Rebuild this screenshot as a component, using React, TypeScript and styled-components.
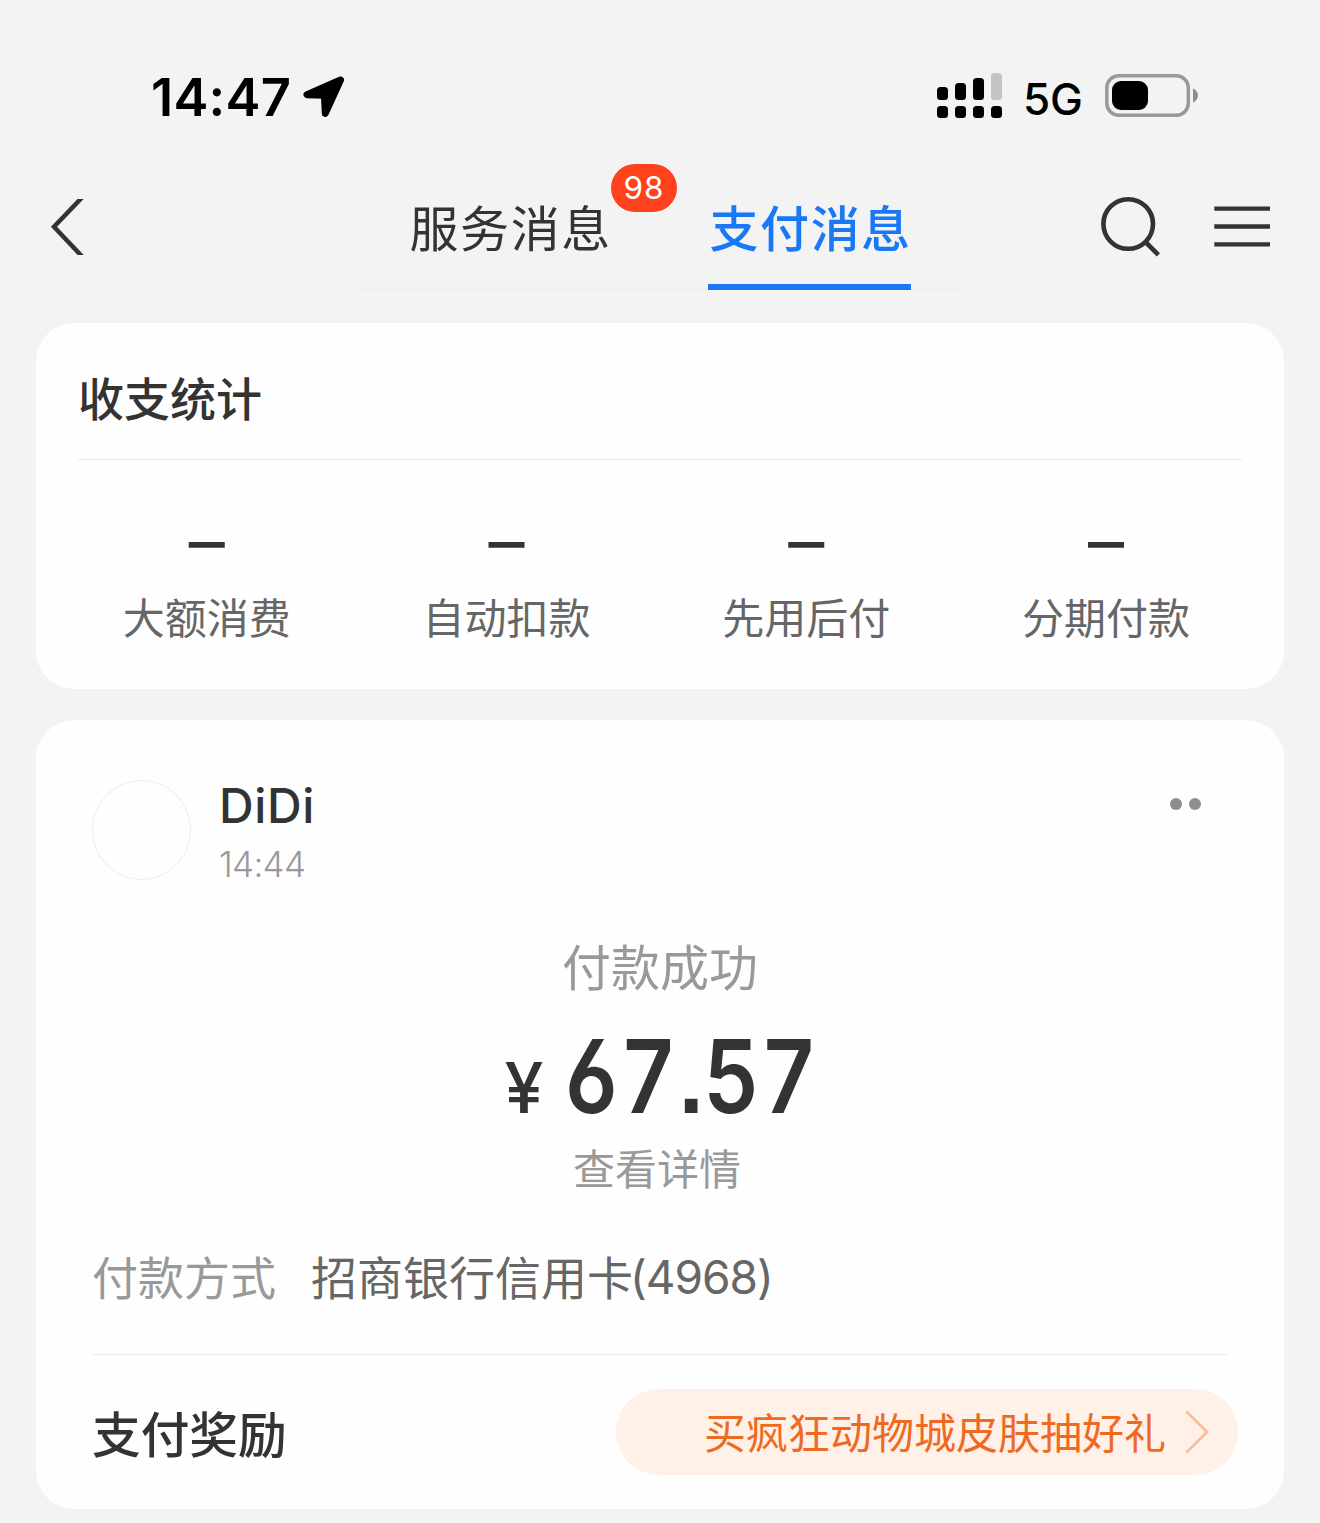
import React from 'react';
import styled, { createGlobalStyle } from 'styled-components';

const GlobalStyle = createGlobalStyle`
  * { box-sizing: border-box; }
  body {
    margin: 0;
    background: #f3f3f3;
    font-family: "Noto Sans CJK SC", sans-serif;
    color: #333;
  }
`;

const latin = '"Inter", "Liberation Sans", sans-serif';

const Screen = styled.main`
  width: 1320px;
  height: 1523px;
  overflow: hidden;
  background: #f3f3f3;
`;

const StatusBar = styled.div`
  height: 150px;
  padding: 44px 122px 0 151px;
  display: flex;
  justify-content: space-between;
  align-items: flex-start;
  color: #000;
  font-family: ${latin};
`;

const Clock = styled.div`
  display: flex;
  align-items: center;
  gap: 12px;
  height: 106px;
  font-size: 52.5px;
  font-weight: 600;
  letter-spacing: 0.2px;
  line-height: 106px;
`;

const Indicators = styled.div`
  display: flex;
  align-items: center;
  height: 104px;
`;

const Network = styled.span`
  margin: 5px 22px 0 21px;
  font-size: 44px;
  font-weight: 450;
  line-height: 104px;
`;

const Nav = styled.header`
  height: 141px;
  display: grid;
  grid-template-columns: 360px 600px 360px;
`;

const NavSide = styled.div<{ $end?: boolean }>`
  display: flex;
  align-items: flex-start;
  gap: 54px;
  justify-content: ${p => (p.$end ? 'flex-end' : 'flex-start')};
  padding: ${p => (p.$end ? '46px 50px 0 0' : '49px 0 0 50px')};
`;

const Tabs = styled.div`
  height: 140px;
  display: flex;
  border-bottom: 1px solid #ededed;
`;

const Tab = styled.div<{ $active?: boolean }>`
  flex: 1;
  display: flex;
  padding-left: 48px;
  color: ${p => (p.$active ? '#1b78f5' : '#333')};
  font-weight: ${p => (p.$active ? 500 : 400)};
`;

const TabLabel = styled.span<{ $active?: boolean }>`
  position: relative;
  height: 140px;
  width: 203px;
  padding-left: 1.5px;
  font-size: 49px;
  letter-spacing: 1.6px;
  line-height: 152px;
  white-space: nowrap;
  border-bottom: ${p => (p.$active ? '6px solid #1b78f5' : '0')};
`;

const Badge = styled.span`
  position: absolute;
  left: 203px;
  top: 14px;
  width: 66px;
  height: 48px;
  border-radius: 24px;
  background: #ff411c;
  color: #fff;
  font-family: ${latin};
  font-size: 31.5px;
  font-weight: 400;
  line-height: 48px;
  letter-spacing: 1px;
  text-align: center;
`;

const Card = styled.section<{ $height: number; $inset: number; $gap: number }>`
  height: ${p => p.$height}px;
  margin: ${p => p.$gap}px 36px 0;
  padding: 0 ${p => p.$inset}px;
  border-radius: 38px;
  background: #fefefe;
`;

const CardTitle = styled.h2`
  height: 137px;
  margin: 0;
  border-bottom: 1px solid #e9e9e9;
  font-size: 46px;
  font-weight: 500;
  line-height: 146px;
`;

const Stats = styled.div`
  display: grid;
  grid-template-columns: repeat(4, 299.7px);
  margin: 52px 0 0 -21px;
`;

const Stat = styled.div`
  display: flex;
  flex-direction: column;
  align-items: center;
`;

const StatValue = styled.span`
  height: 60px;
  font-family: ${latin};
  font-size: 72px;
  font-weight: 400;
  line-height: 58px;
`;

const StatLabel = styled.span`
  color: #666;
  font-size: 42px;
  font-weight: 400;
  line-height: 88px;
`;

const Merchant = styled.div`
  display: flex;
  padding-top: 60px;
  height: 197px;
`;

const Avatar = styled.div`
  width: 99px;
  height: 100px;
  border: 1.5px solid #eee;
  border-radius: 50%;
`;

const MerchantText = styled.div`
  flex: 1;
  margin-left: 28px;
  font-family: ${latin};
`;

const MerchantName = styled.div`
  height: 50px;
  font-size: 48px;
  font-weight: 500;
  letter-spacing: 0.6px;
  line-height: 51px;
`;

const MerchantTime = styled.div`
  height: 68px;
  color: #999;
  font-size: 35px;
  font-weight: 300;
  letter-spacing: -0.7px;
  line-height: 68px;
`;

const MoreDots = styled.div`
  display: flex;
  gap: 7px;
  padding: 18px 27px 0 0;
`;

const Dot = styled.i`
  width: 12px;
  height: 12px;
  border-radius: 50%;
  background: #8e8e8e;
`;

const Caption = styled.div<{ $size: number; $height: number; $shift?: number }>`
  height: ${p => p.$height}px;
  padding-right: ${p => p.$shift ?? 0}px;
  color: #999;
  font-size: ${p => p.$size}px;
  line-height: ${p => p.$height}px;
  text-align: center;
`;

const Amount = styled.div`
  display: flex;
  justify-content: center;
  align-items: baseline;
  height: 122px;
  padding-top: 4px;
  font-family: ${latin};
  line-height: 118px;
  gap: 22px;
`;

const Currency = styled.span`
  font-size: 70px;
  font-weight: 500;
`;

const Figure = styled.span`
  width: 250px;
  font-size: 101.5px;
  font-weight: 600;
  font-kerning: none;
  letter-spacing: 6.5px;
  font-feature-settings: "cv03", "ss07";
  transform: scaleX(0.86);
  transform-origin: left;
  white-space: nowrap;
`;

const Digit = styled.span<{ $spacing: number }>`
  letter-spacing: ${p => p.$spacing}px;
`;

const Method = styled.div`
  display: flex;
  gap: 35px;
  height: 156px;
  border-bottom: 1px solid #ececec;
  font-size: 46px;
  line-height: 152px;
`;

const MethodLabel = styled.span`
  color: #999;
`;

const MethodValue = styled.span`
  display: flex;
  color: #666;
`;

const CardNumber = styled.span`
  margin: 2px 0 0 -3px;
  font-family: ${latin};
  font-size: 46px;
  font-weight: 400;
  letter-spacing: -1px;
`;

const Reward = styled.div`
  display: flex;
  justify-content: space-between;
  align-items: flex-start;
  padding-top: 34px;
  margin-right: -10px;
`;

const RewardTitle = styled.h3`
  margin: 0;
  font-size: 48.7px;
  font-weight: 500;
  line-height: 86px;
`;

const RewardLink = styled.div`
  display: flex;
  align-items: center;
  justify-content: flex-end;
  gap: 19px;
  width: 622px;
  height: 86px;
  padding-right: 29px;
  border-radius: 43px;
  background: #fff0e8;
`;

const RewardText = styled.span`
  margin-top: -4px;
  color: #ee6a22;
  font-size: 42px;
  line-height: 83px;
`;

const LocationIcon = () => (
  <svg width="42" height="42" viewBox="0 0 42 42">
    <path
      d="M37.5 4 L4 18.7 L21.4 19.2 L22.3 37.4 Z"
      fill="#000"
      stroke="#000"
      strokeWidth="7"
      strokeLinejoin="round"
    />
  </svg>
);

const signal = [
  { top: 14, height: 13 },
  { top: 10, height: 17 },
  { top: 5, height: 22 },
  { top: 0, height: 27 },
];

const SignalIcon = () => (
  <svg width="65" height="46" viewBox="0 0 65 46">
    {signal.map((bar, i) => (
      <g key={i}>
        <rect x={i * 18} y={bar.top} width="11" height={bar.height} rx="3.5" fill={i === 3 ? '#c4c4c4' : '#000'} />
        <rect x={i * 18} y="33" width="11" height="12" rx="3.5" />
      </g>
    ))}
  </svg>
);

const BatteryIcon = () => (
  <svg width="93" height="44" viewBox="0 0 93 44">
    <rect x="1.8" y="1.8" width="81.5" height="39.5" rx="12" fill="none" stroke="#999" strokeWidth="3.5" />
    <rect x="7" y="7" width="36" height="29" rx="9" />
    <path d="M88 14.5 C94.5 17 94.5 26 88 28.5 Z" fill="#8c8c8c" />
  </svg>
);

const BackIcon = () => (
  <svg width="34" height="56" viewBox="0 0 34 56" fill="none" stroke="#333" strokeWidth="4.5">
    <path d="M34 -3.5 L4 27.7 L34 59.5" />
  </svg>
);

const SearchIcon = () => (
  <svg width="60" height="62" viewBox="0 0 60 62" fill="none" stroke="#333" strokeWidth="4.6">
    <circle cx="28.2" cy="28" r="24.8" />
    <path d="M45 45.5 L58.4 58.9" />
  </svg>
);

const MenuIcon = () => (
  <svg width="56" height="62" viewBox="0 0 56 62" stroke="#333" strokeWidth="4.3">
    <path d="M0.3 12.6 H56 M0.3 30.5 H56 M0.3 48.4 H56" />
  </svg>
);

const ArrowIcon = () => (
  <svg width="24" height="44" viewBox="0 0 24 44" fill="none" stroke="#f9bd9c" strokeWidth="2.6">
    <path d="M1.5 1.5 L22 22 L1.5 42.5" />
  </svg>
);

const categories = ['大额消费', '自动扣款', '先用后付', '分期付款'];

export default function App() {
  return (
    <Screen>
      <GlobalStyle />
      <StatusBar>
        <Clock>
          <span>14:47</span>
          <LocationIcon />
        </Clock>
        <Indicators>
          <SignalIcon />
          <Network>5G</Network>
          <BatteryIcon />
        </Indicators>
      </StatusBar>

      <Nav>
        <NavSide>
          <BackIcon />
        </NavSide>
        <Tabs>
          <Tab>
            <TabLabel>
              服务消息
              <Badge>98</Badge>
            </TabLabel>
          </Tab>
          <Tab $active>
            <TabLabel $active>支付消息</TabLabel>
          </Tab>
        </Tabs>
        <NavSide $end>
          <SearchIcon />
          <MenuIcon />
        </NavSide>
      </Nav>

      <Card $height={366} $inset={42} $gap={32}>
        <CardTitle>收支统计</CardTitle>
        <Stats>
          {categories.map(name => (
            <Stat key={name}>
              <StatValue>–</StatValue>
              <StatLabel>{name}</StatLabel>
            </Stat>
          ))}
        </Stats>
      </Card>

      <Card $height={789} $inset={56} $gap={31}>
        <Merchant>
          <Avatar />
          <MerchantText>
            <MerchantName>DiDi</MerchantName>
            <MerchantTime>14:44</MerchantTime>
          </MerchantText>
          <MoreDots>
            <Dot />
            <Dot />
          </MoreDots>
        </Merchant>
        <Caption $size={49} $height={96}>付款成功</Caption>
        <Amount>
          <Currency>¥</Currency>
          <Figure>
            6<Digit $spacing={4.2}>7</Digit>
            <Digit $spacing={-2}>.</Digit>57
          </Figure>
        </Amount>
        <Caption $size={42} $height={64} $shift={6}>查看详情</Caption>
        <Method>
          <MethodLabel>付款方式</MethodLabel>
          <MethodValue>
            招商银行信用卡<CardNumber>(4968)</CardNumber>
          </MethodValue>
        </Method>
        <Reward>
          <RewardTitle>支付奖励</RewardTitle>
          <RewardLink>
            <RewardText>买疯狂动物城皮肤抽好礼</RewardText>
            <ArrowIcon />
          </RewardLink>
        </Reward>
      </Card>
    </Screen>
  );
}
